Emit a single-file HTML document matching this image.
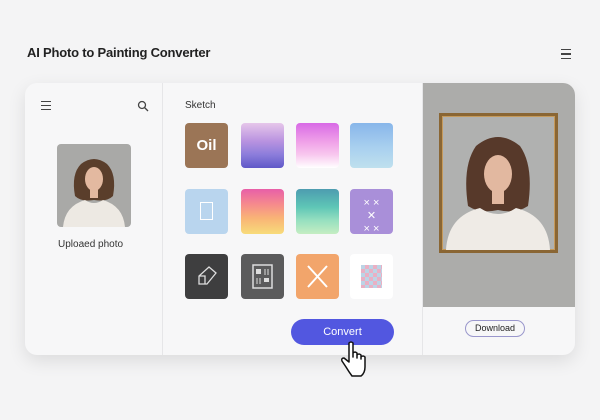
<!DOCTYPE html><html><head><style>
body{margin:0;width:600px;height:420px;background:#f4f4f5;font-family:"Liberation Sans",sans-serif;position:relative;overflow:hidden}
.a{position:absolute}
.card{left:25px;top:83px;width:550px;height:272px;background:#f7f7f8;border-radius:12px;box-shadow:0 6px 18px rgba(0,0,0,.10);overflow:hidden}
.t{width:43px;height:45px;border-radius:4px;overflow:hidden}
</style></head><body>
<div class="a" style="left:27px;top:45px;font-size:13px;color:#222;font-weight:bold;letter-spacing:-0.2px">AI Photo to Painting Converter</div>
<div class="a" style="left:561px;top:49px;width:10px;height:8px;border-top:1.5px solid #444;border-bottom:1.5px solid #444"><div style="margin-top:3px;height:1.5px;background:#444"></div></div>
<div class="a card">
 <div class="a" style="left:137px;top:0;width:1px;height:272px;background:#e6e6e8"></div>
 <div class="a" style="left:397px;top:0;width:1px;height:272px;background:#e6e6e8"></div>
 <div class="a" style="left:16px;top:18px;width:10px;height:7px;border-top:1.5px solid #444;border-bottom:1.5px solid #444"><div style="margin-top:2.5px;height:1.5px;background:#444"></div></div>
 <svg class="a" style="left:112px;top:17px" width="12" height="12"><circle cx="5" cy="5" r="3.5" fill="none" stroke="#444" stroke-width="1.3"/><line x1="7.5" y1="7.5" x2="11" y2="11" stroke="#444" stroke-width="1.3"/></svg>
 <svg class="a" style="left:32px;top:61px;border-radius:4px" width="74" height="83"><rect width="74" height="83" fill="#a9a9a7"/><path d="M18 52 Q14 30 24 20 Q37 10 50 20 Q60 30 56 52 Q50 58 37 56 Q24 58 18 52Z" fill="#5a3e2b"/><ellipse cx="37" cy="35" rx="9" ry="12" fill="#e3b9a0"/><rect x="33" y="44" width="8" height="10" fill="#e3b9a0"/><path d="M6 83 Q8 62 28 56 Q37 62 46 56 Q66 62 68 83Z" fill="#ede9e3"/></svg>
 <div class="a" style="left:33px;top:156px;font-size:10px;color:#333">Uploaed photo</div>
 <div class="a" style="left:160px;top:17px;font-size:10px;color:#333">Sketch</div>
 <div class="a t" style="left:160px;top:40px;background:#9b7556;color:#fff;font-size:15px;font-weight:bold;text-align:center;line-height:45px">Oil</div>
 <div class="a t" style="left:216px;top:40px;background:linear-gradient(#e6c6ea,#b993e0 40%,#8c7ddb 70%,#5f58c8)"></div>
 <div class="a t" style="left:271px;top:40px;background:linear-gradient(#d86ae6,#ef9fe8 40%,#f8c7ee 70%,#fff)"></div>
 <div class="a t" style="left:325px;top:40px;background:linear-gradient(#88b6ea,#a9d0ef 55%,#bfe0ee)"></div>
 <div class="a t" style="left:160px;top:106px;background:#b9d5ee"><div style="margin:13px 0 0 15px;width:11px;height:16px;border:1.5px solid #fff"></div></div>
 <div class="a t" style="left:216px;top:106px;background:linear-gradient(#e85fa8,#f68c8c 35%,#f9b476 65%,#f8dc7a)"></div>
 <div class="a t" style="left:271px;top:106px;background:linear-gradient(#4d9cb0,#5ec6b6 40%,#97e0c0 70%,#c5edc2)"></div>
 <div class="a t" style="left:325px;top:106px;background:#a98fd9;color:#fff;font-size:11px;text-align:center;line-height:13px"><div style="padding-top:8px">× ×<br>✕<br>× ×</div></div>
 <div class="a t" style="left:160px;top:171px;background:#3e3e3f"><svg width="43" height="45"><path d="M14 30 L14 22 L24 13 L31 19 L22 30 Z M14 22 L20 22 L20 30" fill="none" stroke="#ddd" stroke-width="1.3"/></svg></div>
 <div class="a t" style="left:216px;top:171px;background:#5b5b5c"><svg width="43" height="45"><rect x="12" y="11" width="19" height="23" fill="none" stroke="#ddd" stroke-width="1.5"/><rect x="15" y="15" width="5" height="5" fill="#ddd"/><line x1="24" y1="15" x2="24" y2="21" stroke="#ddd"/><line x1="27" y1="15" x2="27" y2="21" stroke="#ddd"/><line x1="16" y1="24" x2="16" y2="30" stroke="#ddd"/><line x1="19" y1="24" x2="19" y2="30" stroke="#ddd"/><rect x="23" y="24" width="5" height="4" fill="#ddd"/></svg></div>
 <div class="a t" style="left:271px;top:171px;background:#f2a56b"><svg width="43" height="45"><path d="M12 12 L31 33 M31 12 L12 33" stroke="#fff" stroke-width="2"/></svg></div>
 <div class="a t" style="left:325px;top:171px;background:#fff"><div style="margin:11px 0 0 11px;width:21px;height:23px;background:repeating-conic-gradient(#e9b0c4 0 25%,#bcd4e6 0 50%) 0 0/8px 8px"></div></div>
 <div class="a" style="left:266px;top:236px;width:103px;height:26px;border-radius:13px;background:#5257e0;color:#fff;font-size:11px;text-align:center;line-height:26px">Convert</div>
 <div class="a" style="left:398px;top:0;width:152px;height:224px;background:#acacaa"></div>
 <div class="a" style="left:414px;top:30px;width:113px;height:134px;border:3px solid #8a6634;box-shadow:0 0 0 1px #c59a5c inset;background:#b0b1b0;overflow:hidden">
  <svg width="113" height="134"><path d="M26 90 Q20 50 34 30 Q56 12 78 30 Q92 50 86 90 Q74 98 56 94 Q38 98 26 90Z" fill="#57392a"/><ellipse cx="56" cy="58" rx="14" ry="19" fill="#e2b8a0"/><rect x="50" y="72" width="12" height="16" fill="#e2b8a0"/><path d="M4 134 Q6 100 38 92 Q56 104 74 92 Q106 100 108 134Z" fill="#efebe6"/></svg>
 </div>
 <div class="a" style="left:440px;top:237px;width:58px;height:15px;border:1px solid #9a97cc;border-radius:9px;font-size:9px;text-align:center;line-height:15px;color:#222">Download</div>
</div>
<svg class="a" style="left:340px;top:340px" width="30" height="40"><path d="M9 3 Q11 1 13 3 L13 17 L13 13 Q15 11 17 13 L17 18 L17 15 Q19 13 21 15 L21 19 L21 17 Q23 15 25 17 L25 27 Q25 33 21 36 L12 36 Q9 32 6 27 L2 21 Q1 18 4 18 L9 22 Z" fill="#fff" stroke="#111" stroke-width="1.5" stroke-linejoin="round"/></svg>
</body></html>
